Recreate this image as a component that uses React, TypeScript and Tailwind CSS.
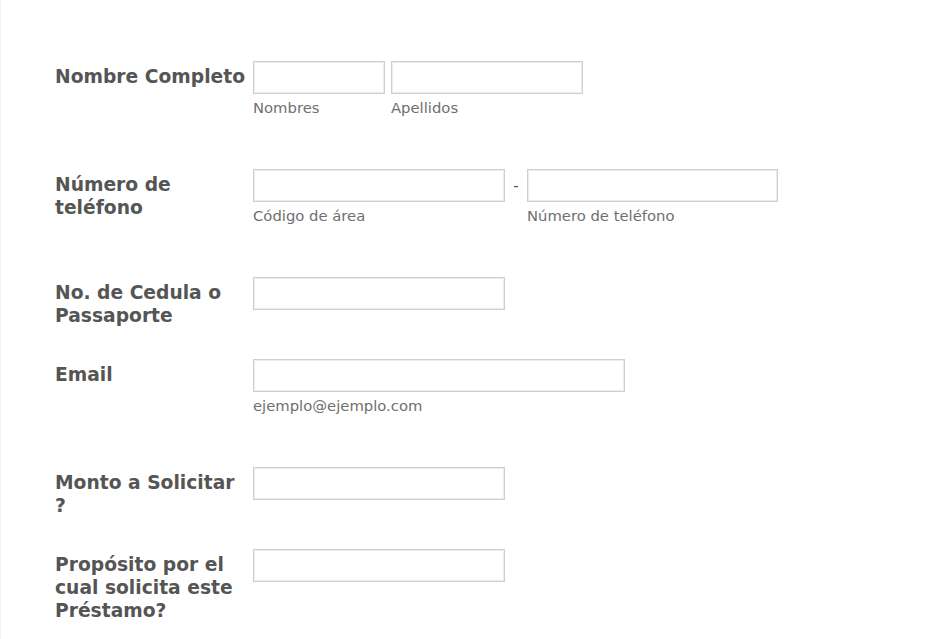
import type { ReactNode } from 'react';

const font = { fontFamily: '"DejaVu Sans", Verdana, sans-serif' };

function Field({ w, sub }: { w: string; sub?: string }) {
  return (
    <div className="flex flex-col">
      <input
        className={`${w} h-[33px] border border-[#cfcfcf] bg-white shadow-[inset_0_0_0_1px_#ececec] outline-none`}
      />
      {sub && <span className="mt-[4px] text-[14.8px] leading-[20px] text-[#6f6f6f]">{sub}</span>}
    </div>
  );
}

function Row({ label, tall, children }: { label: ReactNode; tall?: boolean; children: ReactNode }) {
  return (
    <div className={`flex ${tall ? 'h-[108px]' : 'h-[82px]'}`}>
      <label className="w-[198px] shrink-0 pt-[4px] text-[18.7px] font-bold leading-[23px] text-[#555]">
        {label}
      </label>
      <div className="flex items-start">{children}</div>
    </div>
  );
}

export default function App() {
  return (
    <div className="min-h-[639px] border-l border-[#f3f3f3] bg-white pl-[54px] pt-[61px]" style={font}>
      <Row label="Nombre Completo" tall>
        <Field w="w-[132px]" sub="Nombres" />
        <div className="w-[6px]" />
        <Field w="w-[192px]" sub="Apellidos" />
      </Row>
      <Row label={<>Número de<br />teléfono</>} tall>
        <Field w="w-[252px]" sub="Código de área" />
        <span className="w-[22px] pt-[6px] text-center text-[15px] text-[#555]">-</span>
        <Field w="w-[251px]" sub="Número de teléfono" />
      </Row>
      <Row label={<>No. de Cedula o<br />Passaporte</>}>
        <Field w="w-[252px]" />
      </Row>
      <Row label="Email" tall>
        <Field w="w-[372px]" sub="ejemplo@ejemplo.com" />
      </Row>
      <Row label={<>Monto a Solicitar<br />?</>}>
        <Field w="w-[252px]" />
      </Row>
      <Row label={<>Propósito por el<br />cual solicita este<br />Préstamo?</>}>
        <Field w="w-[252px]" />
      </Row>
    </div>
  );
}
